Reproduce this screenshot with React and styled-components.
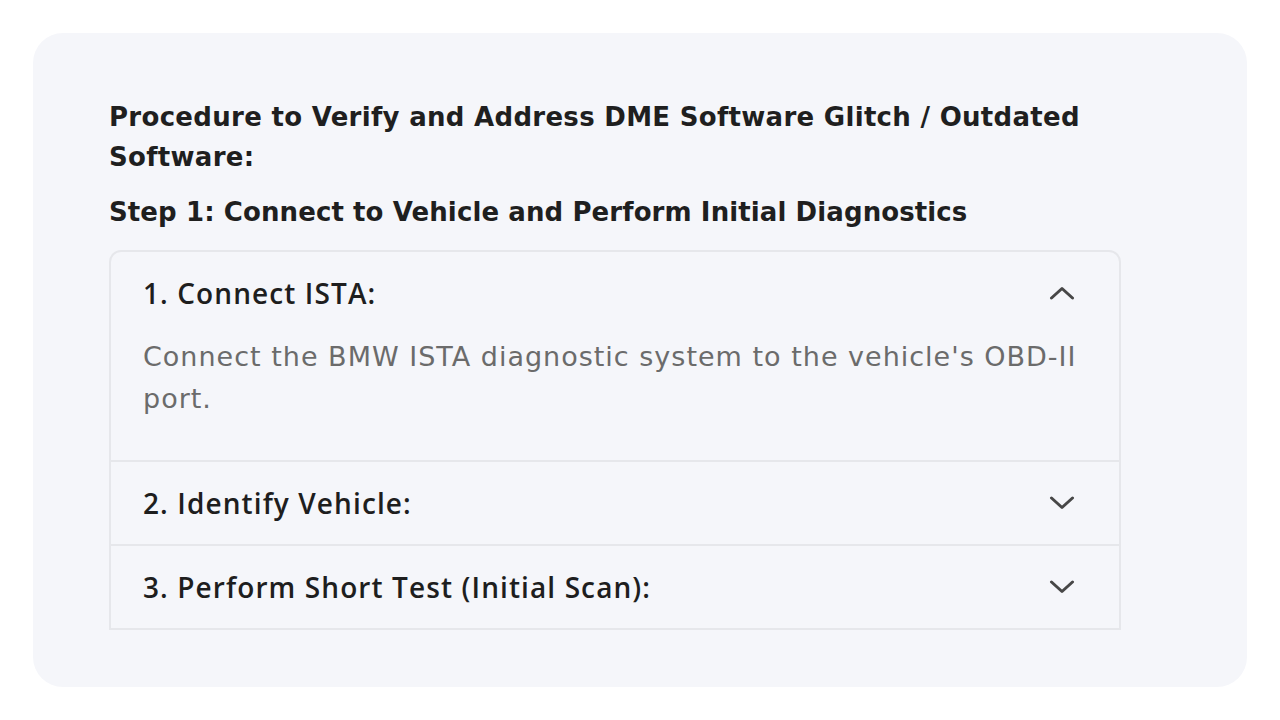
import React, { useState } from "react";
import styled, { createGlobalStyle } from "styled-components";

const GlobalStyle = createGlobalStyle`
  html, body {
    margin: 0;
    padding: 0;
    background: #ffffff;
  }
  body {
    font-family: "DejaVu Sans", "Noto Sans", sans-serif;
  }
`;

const steps = [
  {
    id: 1,
    title: "1. Connect ISTA:",
    body: "Connect the BMW ISTA diagnostic system to the vehicle's OBD-II port.",
  },
  { id: 2, title: "2. Identify Vehicle:", body: "" },
  { id: 3, title: "3. Perform Short Test (Initial Scan):", body: "" },
];

function Chevron({ up }) {
  return (
    <svg width="26" height="14" viewBox="0 0 26 14" fill="none">
      <path
        d={up ? "M2.5 12L13 2.5 23.5 12" : "M2.5 2L13 11.5 23.5 2"}
        stroke="#474747"
        strokeWidth="3"
        strokeLinecap="round"
        strokeLinejoin="round"
      />
    </svg>
  );
}

export default function App() {
  const [open, setOpen] = useState(1);

  return (
    <>
      <GlobalStyle />
      <Page>
        <Card>
          <Title>
            Procedure to Verify and Address DME Software Glitch / Outdated
            Software:
          </Title>
          <StepHeading>
            Step 1: Connect to Vehicle and Perform Initial Diagnostics
          </StepHeading>
          <Accordion>
            {steps.map((s) => (
              <Item key={s.id}>
                <Header onClick={() => setOpen(open === s.id ? 0 : s.id)}>
                  <span>{s.title}</span>
                  <Chevron up={open === s.id} />
                </Header>
                {open === s.id && s.body && <Body>{s.body}</Body>}
              </Item>
            ))}
          </Accordion>
        </Card>
      </Page>
    </>
  );
}

const Page = styled.div`
  padding: 33px;
`;

const Card = styled.div`
  box-sizing: border-box;
  height: 654px;
  background: #f5f6fa;
  border-radius: 30px;
  padding: 64px 76px 0;
`;

const Title = styled.h2`
  margin: 0;
  font-size: 26px;
  line-height: 40px;
  font-weight: 700;
  letter-spacing: 0.3px;
  color: #1f1f1f;
  max-width: 1000px;
`;

const StepHeading = styled.h3`
  margin: 15px 0 18px;
  font-size: 26px;
  line-height: 40px;
  font-weight: 700;
  letter-spacing: 0.1px;
  color: #1f1f1f;
`;

const Accordion = styled.div`
  width: 1012px;
  box-sizing: border-box;
  border: 2px solid #e6e7eb;
  border-radius: 12px 12px 0 0;
`;

const Item = styled.div`
  & + & {
    border-top: 2px solid #e6e7eb;
  }
`;

const Header = styled.div`
  display: flex;
  align-items: center;
  justify-content: space-between;
  height: 82px;
  padding: 0 44px 0 32px;
  font-family: "Open Sans", "DejaVu Sans", sans-serif;
  font-size: 28px;
  font-weight: 600;
  letter-spacing: 1.1px;
  color: #1e1e1e;
  cursor: pointer;
`;

const Body = styled.div`
  padding: 2px 40px 40px 32px;
  font-size: 27px;
  line-height: 42px;
  font-weight: 400;
  letter-spacing: 1px;
  color: #6b6b6b;
`;
